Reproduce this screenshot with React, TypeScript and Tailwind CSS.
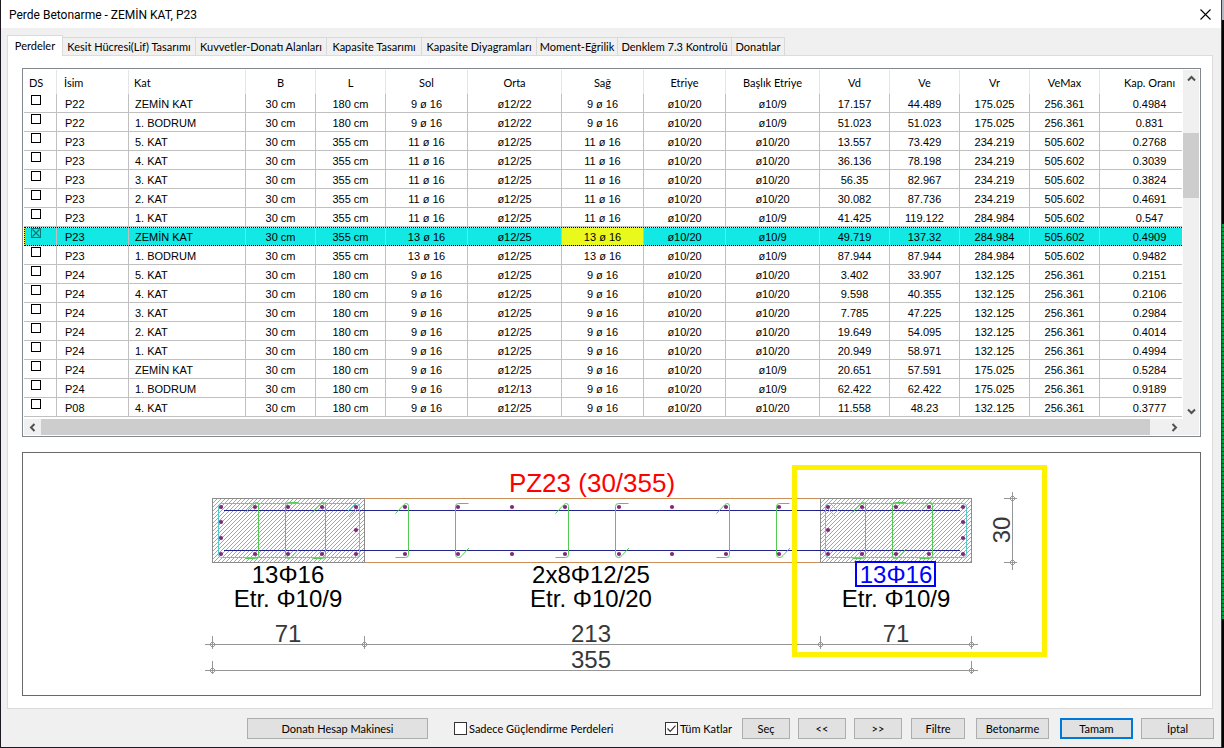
import React, { useState } from "react";

type Row = {
  name: string;
  floor: string;
  length: string;
  side: string;
  mid: string;
  capTie: string;
  vd: string;
  ve: string;
  vr: string;
  veMax: string;
  ratio: string;
};

const row = (
  name: string, floor: string, length: string, side: string, mid: string, capTie: string,
  vd: string, ve: string, vr: string, veMax: string, ratio: string,
): Row => ({ name, floor, length, side, mid, capTie, vd, ve, vr, veMax, ratio });

const ROWS: Row[] = [
  row("P22", "ZEMİN KAT", "180 cm", "9 ø 16", "ø12/22", "ø10/9", "17.157", "44.489", "175.025", "256.361", "0.4984"),
  row("P22", "1. BODRUM", "180 cm", "9 ø 16", "ø12/22", "ø10/9", "51.023", "51.023", "175.025", "256.361", "0.831"),
  row("P23", "5. KAT", "355 cm", "11 ø 16", "ø12/25", "ø10/20", "13.557", "73.429", "234.219", "505.602", "0.2768"),
  row("P23", "4. KAT", "355 cm", "11 ø 16", "ø12/25", "ø10/20", "36.136", "78.198", "234.219", "505.602", "0.3039"),
  row("P23", "3. KAT", "355 cm", "11 ø 16", "ø12/25", "ø10/20", "56.35", "82.967", "234.219", "505.602", "0.3824"),
  row("P23", "2. KAT", "355 cm", "11 ø 16", "ø12/25", "ø10/20", "30.082", "87.736", "234.219", "505.602", "0.4691"),
  row("P23", "1. KAT", "355 cm", "11 ø 16", "ø12/25", "ø10/9", "41.425", "119.122", "284.984", "505.602", "0.547"),
  row("P23", "ZEMİN KAT", "355 cm", "13 ø 16", "ø12/25", "ø10/9", "49.719", "137.32", "284.984", "505.602", "0.4909"),
  row("P23", "1. BODRUM", "355 cm", "13 ø 16", "ø12/25", "ø10/9", "87.944", "87.944", "284.984", "505.602", "0.9482"),
  row("P24", "5. KAT", "180 cm", "9 ø 16", "ø12/25", "ø10/20", "3.402", "33.907", "132.125", "256.361", "0.2151"),
  row("P24", "4. KAT", "180 cm", "9 ø 16", "ø12/25", "ø10/20", "9.598", "40.355", "132.125", "256.361", "0.2106"),
  row("P24", "3. KAT", "180 cm", "9 ø 16", "ø12/25", "ø10/20", "7.785", "47.225", "132.125", "256.361", "0.2984"),
  row("P24", "2. KAT", "180 cm", "9 ø 16", "ø12/25", "ø10/20", "19.649", "54.095", "132.125", "256.361", "0.4014"),
  row("P24", "1. KAT", "180 cm", "9 ø 16", "ø12/25", "ø10/20", "20.949", "58.971", "132.125", "256.361", "0.4994"),
  row("P24", "ZEMİN KAT", "180 cm", "9 ø 16", "ø12/25", "ø10/9", "20.651", "57.591", "175.025", "256.361", "0.5284"),
  row("P24", "1. BODRUM", "180 cm", "9 ø 16", "ø12/13", "ø10/9", "62.422", "62.422", "175.025", "256.361", "0.9189"),
  row("P08", "4. KAT", "180 cm", "9 ø 16", "ø12/25", "ø10/20", "11.558", "48.23", "132.125", "256.361", "0.3777"),
];

const SELECTED = 7;

const TABS = [
  { label: "Kesit Hücresi(Lif) Tasarımı", width: "w-[133px]" },
  { label: "Kuvvetler-Donatı Alanları", width: "w-[131px]" },
  { label: "Kapasite Tasarımı", width: "w-[95px]" },
  { label: "Kapasite Diyagramları", width: "w-[115px]" },
  { label: "Moment-Eğrilik", width: "w-[81px]" },
  { label: "Denklem 7.3 Kontrolü", width: "w-[114px]" },
  { label: "Donatılar", width: "w-[53px]" },
];

const HEADERS = ["DS", "İsim", "Kat", "B", "L", "Sol", "Orta", "Sağ", "Etriye", "Başlık Etriye", "Vd", "Ve", "Vr", "VeMax", "Kap. Oranı"];

const HEADER_ALIGN = ["pl-[5px] text-left", "pl-[7px] text-left", "pl-[5px] text-left"];
const CELL_ALIGN = ["pl-2 text-left", "pl-[6px] text-left"];

function Chevron({ d }: { d: string }) {
  return (
    <svg width="9" height="9" viewBox="0 0 9 9" fill="none" stroke="#505050" strokeWidth="2" aria-hidden="true">
      <path d={d} />
    </svg>
  );
}

function RowCheckbox({ label, checked, onChange }: { label: string; checked: boolean; onChange: () => void }) {
  return (
    <label className="relative block size-[10px]">
      <input
        type="checkbox"
        aria-label={label}
        checked={checked}
        onChange={onChange}
        className="block size-[10px] appearance-none border border-black bg-white checked:border-[#0a7a78] checked:bg-transparent"
      />
      {checked && (
        <svg className="pointer-events-none absolute inset-0" width="10" height="10" viewBox="0 0 10 10" stroke="#0a7a78" strokeWidth="1.2" aria-hidden="true">
          <path d="M1.5 1.5l7 7M8.5 1.5l-7 7" />
        </svg>
      )}
    </label>
  );
}

function WallTable() {
  const [checked, setChecked] = useState<Set<number>>(new Set([SELECTED]));
  const toggle = (i: number) =>
    setChecked((prev) => {
      const next = new Set(prev);
      if (next.has(i)) next.delete(i);
      else next.add(i);
      return next;
    });

  return (
    <div className="border border-[#828790] bg-white p-px">
      <div className="flex">
        <div className="min-w-0 flex-1 overflow-hidden pb-[2px]">
          <table className="w-full min-w-[1176px] table-fixed border-separate border-spacing-0">
            <colgroup>
              <col className="w-[33px]" />
              <col className="w-[72px]" />
              <col className="w-[117px]" />
              <col className="w-[70px]" />
              <col className="w-[70px]" />
              <col className="w-[82px]" />
              <col className="w-[94px]" />
              <col className="w-[82px]" />
              <col className="w-[82px]" />
              <col className="w-[94px]" />
              <col className="w-[70px]" />
              <col className="w-[70px]" />
              <col className="w-[70px]" />
              <col className="w-[70px]" />
              <col />
            </colgroup>
            <thead>
              <tr className="h-6">
                {HEADERS.map((h, i) => (
                  <th
                    key={h}
                    scope="col"
                    className={`whitespace-nowrap border-r border-[#e5e5e5] p-0 pt-px font-normal ${HEADER_ALIGN[i] ?? "text-center"}`}
                  >
                    {h}
                  </th>
                ))}
              </tr>
            </thead>
            <tbody className="font-['Liberation_Sans',Arial,sans-serif] leading-4">
              {ROWS.map((r, i) => {
                const values = [r.name, r.floor, "30 cm", r.length, r.side, r.mid, r.side, "ø10/20", r.capTie, r.vd, r.ve, r.vr, r.veMax, r.ratio];
                const selected = i === SELECTED;
                return (
                  <tr
                    key={i}
                    className={`h-[19px] ${selected ? "bg-[#12e8e4] shadow-[inset_0_0_0_1px_#f4f43c] outline-1 -outline-offset-1 outline-dotted outline-black" : ""}`}
                  >
                    <td className="border-r border-b border-[#c0c0c0] p-0 pt-px pl-[7px] align-top">
                      <RowCheckbox label={`${r.name} ${r.floor}`} checked={checked.has(i)} onChange={() => toggle(i)} />
                    </td>
                    {values.map((v, c) => (
                      <td
                        key={c}
                        className={`whitespace-nowrap border-r border-b border-[#c0c0c0] p-0 pt-px ${CELL_ALIGN[c] ?? "text-center"} ${selected && c === 6 ? "bg-[#eaf91c]" : ""}`}
                      >
                        {v}
                      </td>
                    ))}
                  </tr>
                );
              })}
            </tbody>
          </table>
        </div>
        <div className="ml-px flex w-4 flex-col bg-[#f0f0f0]">
          <button type="button" aria-label="Yukarı" className="flex h-4 items-center justify-center">
            <Chevron d="M1 6.5l3.5-3.5l3.5 3.5" />
          </button>
          <div className="h-[47px]" />
          <div className="h-[65px] bg-[#cdcdcd]" />
          <div className="flex-1" />
          <button type="button" aria-label="Aşağı" className="flex h-4 items-center justify-center">
            <Chevron d="M1 2.5l3.5 3.5l3.5-3.5" />
          </button>
        </div>
      </div>
      <div className="flex h-4 bg-[#f0f0f0]">
        <button type="button" aria-label="Sola" className="flex w-[17px] items-center justify-center">
          <Chevron d="M6.5 1l-3.5 3.5l3.5 3.5" />
        </button>
        <div className="flex-1 bg-[#cdcdcd]" />
        <div className="w-4" />
        <button type="button" aria-label="Sağa" className="mr-4 flex w-[17px] items-center justify-center">
          <Chevron d="M2.5 1l3.5 3.5l-3.5 3.5" />
        </button>
      </div>
    </div>
  );
}

/* Tie with its leg on the right of the bar; t and b are the top and bottom of the leg. */
const tieRight = (x: number, t: number, b: number) =>
  `M${x - 13} ${t + 10}l8 -8.5q1.5 -1.5 3 -1.5q2 0 2 3V${b - 3}q0 3 -3 3H${x - 13}`;

/* Tie with its leg on the left of the bar. */
const tieLeft = (x: number, t: number, b: number) =>
  `M${x + 13} ${t}h-10q-3 0 -3 3V${b - 3}q0 3 3 3q2 0 3.5 -2l7 -7.5`;

const LEFT_BARS: [number, number][] = [
  [221, 507], [221, 522], [221, 538], [221, 554],
  [255, 507], [255, 554], [288, 507], [288, 554], [322, 507], [322, 554],
  [356, 507], [356, 530], [356, 554],
];
const RIGHT_BARS: [number, number][] = [
  [828, 507], [828, 530], [828, 554],
  [862, 507], [862, 554], [896, 507], [896, 554], [929, 507], [929, 554],
  [963, 507], [963, 522], [963, 538], [963, 554],
];
const WEB_BARS: [number, number][] = [405, 458, 512, 565, 619, 672, 726, 779].flatMap(
  (x) => [[x, 507], [x, 554]] as [number, number][],
);

const TIES = [
  tieRight(258.5, 502.5, 558.5),
  tieLeft(285.5, 502.5, 558.5),
  tieRight(325.5, 502.5, 558.5),
  tieRight(408.5, 503.5, 557.5),
  tieLeft(455.5, 503.5, 557.5),
  tieRight(568.5, 503.5, 557.5),
  tieLeft(615.5, 503.5, 557.5),
  tieRight(729.5, 503.5, 557.5),
  tieLeft(776.5, 503.5, 557.5),
  tieRight(865.5, 502.5, 558.5),
  tieLeft(892.5, 502.5, 558.5),
  tieRight(932.5, 502.5, 558.5),
];

const NODES: [number, number][] = [
  [212.5, 644.5], [364.5, 644.5], [820.5, 644.5], [971.5, 644.5],
  [212.5, 670.5], [971.5, 670.5],
  [1012.5, 498.5], [1012.5, 562.5],
];

function SectionDrawing() {
  return (
    <svg
      viewBox="23 453 1177 242"
      role="img"
      aria-label="PZ23 perde kesiti"
      className="block h-[242px] w-full font-['Liberation_Sans',Arial,sans-serif] text-2xl"
      fill="none"
    >
      <defs>
        <pattern id="hatch" width="4" height="4" patternUnits="userSpaceOnUse">
          <path d="M0 3.5h1M1 2.5h1M2 1.5h1M3 0.5h1" stroke="#9aa6ba" />
        </pattern>
      </defs>

      <path d="M364 498.5H820M364 562.5H820" stroke="#cd8f5a" />
      <rect x="212.5" y="498.5" width="152" height="64" fill="url(#hatch)" stroke="#8c8c8c" />
      <rect x="820.5" y="498.5" width="151" height="64" fill="url(#hatch)" stroke="#8c8c8c" />
      <path d="M224 510.5H960M224 550.5H960" stroke="#23238c" />
      <g stroke="#5ccaca">
        <rect x="218.5" y="503.5" width="141" height="54" rx="3" />
        <rect x="825.5" y="503.5" width="141" height="54" rx="3" />
        <path d="M349 517l9 -9M348 511l7 -7M827 508l8 8M831 504l7 7" />
      </g>
      <g stroke="#55c855">
        {TIES.map((d) => (
          <path key={d} d={d} />
        ))}
      </g>
      <g fill="#80287f">
        {[...LEFT_BARS, ...WEB_BARS, ...RIGHT_BARS].map(([x, y]) => (
          <circle key={`${x}-${y}`} cx={x} cy={y} r="2.1" />
        ))}
      </g>

      <g stroke="#969696">
        <path d="M205 644.5H978M205 670.5H978M1012.5 492V570" />
        <path d="M212.5 636V649M364.5 636V649M820.5 636V649M971.5 636V649M212.5 661V674M971.5 661V674M1004 498.5H1017M1004 562.5H1017" />
        {NODES.map(([x, y]) => (
          <path key={`${x}-${y}`} d={`M${x - 3} ${y}l3 -3l3 3l-3 3z`} />
        ))}
      </g>

      <g textAnchor="middle" fill="#000000">
        <text x="592" y="492" fill="#ff0000" fontSize="26">PZ23 (30/355)</text>
        <text x="288" y="583">13Φ16</text>
        <text x="288" y="607">Etr. Φ10/9</text>
        <text x="591" y="583">2x8Φ12/25</text>
        <text x="591" y="607">Etr. Φ10/20</text>
        <text x="896" y="583" fill="#0000ff">13Φ16</text>
        <text x="896" y="607">Etr. Φ10/9</text>
      </g>
      <g textAnchor="middle" fill="#383838">
        <text x="288" y="642">71</text>
        <text x="591" y="642">213</text>
        <text x="896" y="642">71</text>
        <text x="591" y="668">355</text>
        <text transform="translate(1010 530) rotate(-90)">30</text>
      </g>
      <rect x="856" y="562" width="79" height="24" stroke="#0000ff" strokeWidth="2" />
      <rect x="794.5" y="467.5" width="250" height="187" stroke="#fff200" strokeWidth="5" />
    </svg>
  );
}

function Push({ children, className }: { children: React.ReactNode; className: string }) {
  return (
    <button type="button" className={`h-[21px] bg-[#e1e1e1] text-center leading-4 ${className}`}>
      {children}
    </button>
  );
}

function Check({ label, defaultChecked, className }: { label: string; defaultChecked?: boolean; className: string }) {
  return (
    <label className={`relative flex items-center gap-[2px] whitespace-nowrap ${className}`}>
      <input
        type="checkbox"
        defaultChecked={defaultChecked}
        className="peer size-[13px] shrink-0 appearance-none border border-[#333333] bg-white"
      />
      <svg
        className="pointer-events-none absolute left-0 hidden peer-checked:block"
        width="13" height="13" viewBox="0 0 13 13" fill="none" stroke="#333333" strokeWidth="1.2" aria-hidden="true"
      >
        <path d="M2.5 6.5l2.7 2.8l5.3 -5.6" />
      </svg>
      {label}
    </label>
  );
}

export default function App() {
  return (
    <div className="flex border-b border-l border-[#1c1a20] bg-[#f0f0f0] font-[Lato,Tahoma,sans-serif] text-[11px] leading-4 text-black">
      <div className="flex min-w-0 flex-1 flex-col">
        <header className="flex h-7 items-center justify-between bg-white pt-px pr-2 pl-2">
          <h1 className="font-[Roboto,'Segoe_UI',sans-serif] text-xs font-normal">Perde Betonarme - ZEMİN KAT, P23</h1>
          <button type="button" aria-label="Kapat" className="flex size-4 items-center justify-center">
            <svg width="11" height="11" viewBox="0 0 11 11" stroke="#000000" strokeWidth="1.1" aria-hidden="true">
              <path d="M0.5 0.5l10 10M10.5 0.5l-10 10" />
            </svg>
          </button>
        </header>

        <nav role="tablist" className="flex items-end pt-[7px] pl-[6px]">
          <button
            type="button"
            role="tab"
            aria-selected="true"
            className="relative z-10 -mb-px h-[21px] w-14 border border-b-0 border-[#dcdcdc] bg-white pb-px"
          >
            Perdeler
          </button>
          {TABS.map((t) => (
            <button
              key={t.label}
              type="button"
              role="tab"
              aria-selected="false"
              className={`h-[18px] whitespace-nowrap border-t border-r border-[#d9d9d9] pt-px ${t.width}`}
            >
              {t.label}
            </button>
          ))}
        </nav>

        <main className="mr-2 ml-[6px] flex flex-col gap-[15px] border border-[#dcdcdc] bg-white pt-3 pr-[11px] pb-3 pl-[14px]">
          <WallTable />
          <section className="border border-[#696969] bg-white">
            <SectionDrawing />
          </section>
        </main>

        <footer className="flex items-start justify-end pt-[9px] pr-[7px] pb-2">
          <Push className="w-[181px] border border-[#adadad]">Donatı Hesap Makinesi</Push>
          <Check className="ml-[26px] h-[21px] w-[211px]" label="Sadece Güçlendirme Perdeleri" />
          <Check className="h-[21px] w-[77px]" label="Tüm Katlar" defaultChecked />
          <div className="flex gap-2">
            <Push className="w-12 border border-[#adadad]">Seç</Push>
            <Push className="w-12 border border-[#adadad]">&lt;&lt;</Push>
            <Push className="w-12 border border-[#adadad]">&gt;&gt;</Push>
          </div>
          <Push className="ml-[9px] w-[54px] border border-[#adadad]">Filtre</Push>
          <Push className="ml-[11px] w-[73px] border border-[#adadad]">Betonarme</Push>
          <Push className="ml-[11px] w-[73px] border-2 border-[#0078d7]">Tamam</Push>
          <Push className="ml-2 w-[73px] border border-[#adadad]">İptal</Push>
        </footer>
      </div>

      <div aria-hidden="true" className="flex w-[3px] shrink-0 flex-col border-l border-[#3c3c44] bg-[#050505]">
        <div className="h-5 bg-[#b4b8c4]" />
        <div className="h-[204px]" />
        <div className="h-[395px] bg-[repeating-linear-gradient(to_bottom,#00a040_0px,#00a040_3px,#0c4022_3px,#0c4022_4px)]" />
      </div>
    </div>
  );
}
